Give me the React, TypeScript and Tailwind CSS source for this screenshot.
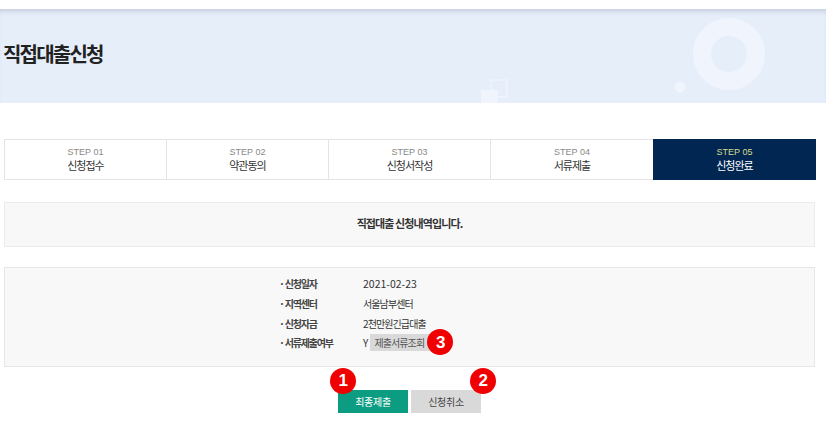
const font = "font-['Noto_Sans_CJK_KR','Noto_Sans',sans-serif]";

const steps = [
  { no: "STEP 01", label: "신청접수" },
  { no: "STEP 02", label: "약관동의" },
  { no: "STEP 03", label: "신청서작성" },
  { no: "STEP 04", label: "서류제출" },
  { no: "STEP 05", label: "신청완료", active: true },
];

const rows = [
  { name: "신청일자", value: "2021-02-23", date: true },
  { name: "지역센터", value: "서울남부센터" },
  { name: "신청자금", value: "2천만원긴급대출" },
];

const Badge = ({ n, className }: { n: number; className: string }) => (
  <span
    className={`absolute flex h-[26px] w-[26px] items-center justify-center rounded-full bg-[#f00000] font-['Liberation_Sans',sans-serif] text-[17px] font-bold text-white ${className}`}
  >
    {n}
  </span>
);

const Banner = () => (
  <div className="relative h-[94px] overflow-hidden bg-[#e6eefa] shadow-[inset_0_5px_5px_-3px_rgba(90,100,120,0.25)]">
    <div className="flex h-[90px] items-center">
      <h1 className="pl-[3px] text-[20px] font-bold leading-none tracking-[-1.8px] text-[#222]">직접대출신청</h1>
    </div>
    <svg className="absolute left-0 top-0" width="826" height="94" viewBox="0 0 826 94">
      <circle cx="729" cy="45" r="27" fill="none" stroke="#f0f5fd" strokeWidth="18" />
      <circle cx="680" cy="78" r="5.5" fill="#f0f5fd" />
      <rect x="491" y="71" width="16" height="17" fill="none" stroke="#f0f5fd" strokeWidth="1.5" />
      <rect x="481" y="81" width="17" height="13" fill="#f0f5fd" />
    </svg>
  </div>
);

const Steps = () => (
  <div className="ml-1 flex h-[41px] w-[812px] border border-[#e4e4e4]">
    {steps.map((s, i) => (
      <div
        key={s.no}
        className={`flex flex-none flex-col items-center justify-center pb-[1px] ${
          s.active ? "-my-px -mr-px w-[163px] bg-[#012652]" : i < 3 ? "w-[162px] border-r border-[#e4e4e4]" : "w-[162px]"
        }`}
      >
        <span
          className={`font-['Liberation_Sans',sans-serif] text-[9px] leading-[13px] ${
            s.active ? "text-[#d6dc8e]" : "text-[#888]"
          }`}
        >
          {s.no}
        </span>
        <span className={`text-[11px] leading-[13px] tracking-[-1px] ${s.active ? "text-white" : "text-[#333]"}`}>
          {s.label}
        </span>
      </div>
    ))}
  </div>
);

export default function App() {
  return (
    <div className={`h-[432px] w-[826px] bg-white pt-[9px] ${font}`}>
      <Banner />
      <div className="mt-9">
        <Steps />
      </div>
      <div className="ml-1 mt-[22px] flex h-[45px] w-[811px] items-center justify-center border border-[#ebebeb] bg-[#f8f8f8] pb-[2px] text-[11px] font-bold tracking-[-0.9px] text-[#333]">
        직접대출 신청내역입니다.
      </div>
      <div className="ml-1 mt-[20px] h-[100px] w-[811px] border border-[#e6e6e6] bg-[#f8f8f8] pl-[274px] pt-[6px] text-[10px] text-[#333]">
        {rows.map((r) => (
          <div key={r.name} className="flex h-[19.7px] items-center">
            <span className="w-[84px] font-bold tracking-[-1.2px] text-[#444]">· {r.name}</span>
            <span className={r.date ? "text-[10.5px]" : "tracking-[-0.9px]"}>{r.value}</span>
          </div>
        ))}
        <div className="flex h-[19.7px] items-center">
          <span className="w-[84px] font-bold tracking-[-1.2px] text-[#444]">· 서류제출여부</span>
          <span>Y</span>
          <span className="relative ml-[2px] flex h-[17px] w-[61px] items-center justify-center bg-[#d9d9d9] pr-[3px] tracking-[-0.9px] text-[#555]">
            제출서류조회
            <Badge n={3} className="left-[57px] top-[-5px]" />
          </span>
        </div>
      </div>
      <div className="ml-[338px] mt-[23px] flex gap-[3px]">
        <button className="relative h-[23px] w-[70px] bg-[#0b9c82] text-[10px] tracking-[-0.3px] text-white">
          최종제출
          <Badge n={1} className="left-[-8px] top-[-22px]" />
        </button>
        <button className="relative h-[23px] w-[70px] bg-[#d9d9d9] text-[10px] tracking-[-0.3px] text-[#444]">
          신청취소
          <Badge n={2} className="left-[59px] top-[-22px]" />
        </button>
      </div>
    </div>
  );
}
